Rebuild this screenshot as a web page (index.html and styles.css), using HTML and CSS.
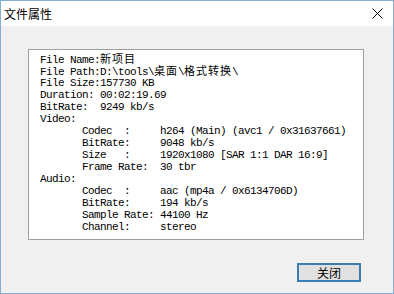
FILE: index.html
```html
<!DOCTYPE html>
<html>
<head>
<meta charset="utf-8">
<link rel="stylesheet" href="styles.css">
</head>
<body>
<div class="window">
  <div class="titlebar">
    <span class="title">文件属性</span>
    <svg class="close" width="11" height="11" viewBox="0 0 11 11"><path d="M0.5 0.5 L10.5 10.5 M10.5 0.5 L0.5 10.5" stroke="#000" stroke-width="1" fill="none"/></svg>
  </div>
  <div class="content">
    <div class="infobox"><div class="line">File Name:<span class="cjk">新项目</span></div><div class="line">File Path:D:\tools\<span class="cjk">桌面</span>\<span class="cjk">格式转换</span>\</div><div class="line">File Size:157730 KB</div><div class="line">Duration: 00:02:19.69</div><div class="line">BitRate:  9249 kb/s</div><div class="line">Video:</div><div class="line">       Codec  :     h264 (Main) (avc1 / 0x31637661)</div><div class="line">       BitRate:     9048 kb/s</div><div class="line">       Size   :     1920x1080 [SAR 1:1 DAR 16:9]</div><div class="line">       Frame Rate:  30 tbr</div><div class="line">Audio:</div><div class="line">       Codec  :     aac (mp4a / 0x6134706D)</div><div class="line">       BitRate:     194 kb/s</div><div class="line">       Sample Rate: 44100 Hz</div><div class="line">       Channel:     stereo</div></div>
    <div class="actions">
      <button class="btn">关闭</button>
    </div>
  </div>
</div>
</body>
</html>
```

FILE: styles.css
```css
html, body {
  margin: 0;
  padding: 0;
  background: #f0f0f0;
}
.window {
  width: 394px;
  height: 294px;
  box-sizing: border-box;
  border: 1px solid #86acd0;
  display: flex;
  flex-direction: column;
  background: #f0f0f0;
  overflow: hidden;
}
.titlebar {
  height: 25px;
  flex: none;
  background: #ffffff;
  display: flex;
  align-items: center;
  justify-content: space-between;
  padding: 0 10px 0 3px;
}
.title {
  font-family: "Noto Sans CJK SC", sans-serif;
  font-size: 12px;
  color: #000;
  line-height: 14px;
}
.close {
  display: block;
}
.content {
  flex: 1;
  padding: 23px 0 0 27px;
  display: flex;
  flex-direction: column;
}
.infobox {
  width: 336px;
  height: 191px;
  box-sizing: border-box;
  background: #ffffff;
  border: 1px solid #a0a0a0;
  padding: 3px 0 0 11px;
  font-family: "Liberation Mono", monospace;
  font-size: 11px;
  letter-spacing: -0.6px;
  color: #000;
}
.line {
  height: 12px;
  line-height: 12px;
  white-space: pre;
}
.cjk {
  font-family: "Noto Sans CJK SC", sans-serif;
  font-size: 11px;
  letter-spacing: 1px;
  line-height: 11px;
}
.actions {
  display: flex;
  justify-content: flex-end;
  padding: 23px 32px 0 0;
}
.btn {
  width: 64px;
  height: 19px;
  box-sizing: border-box;
  border: 2px solid #3a7db3;
  background: #e1e1e1;
  font-family: "Noto Sans CJK SC", sans-serif;
  font-size: 12px;
  line-height: 13px;
  color: #000;
  padding: 0;
  margin: 0;
}
```
